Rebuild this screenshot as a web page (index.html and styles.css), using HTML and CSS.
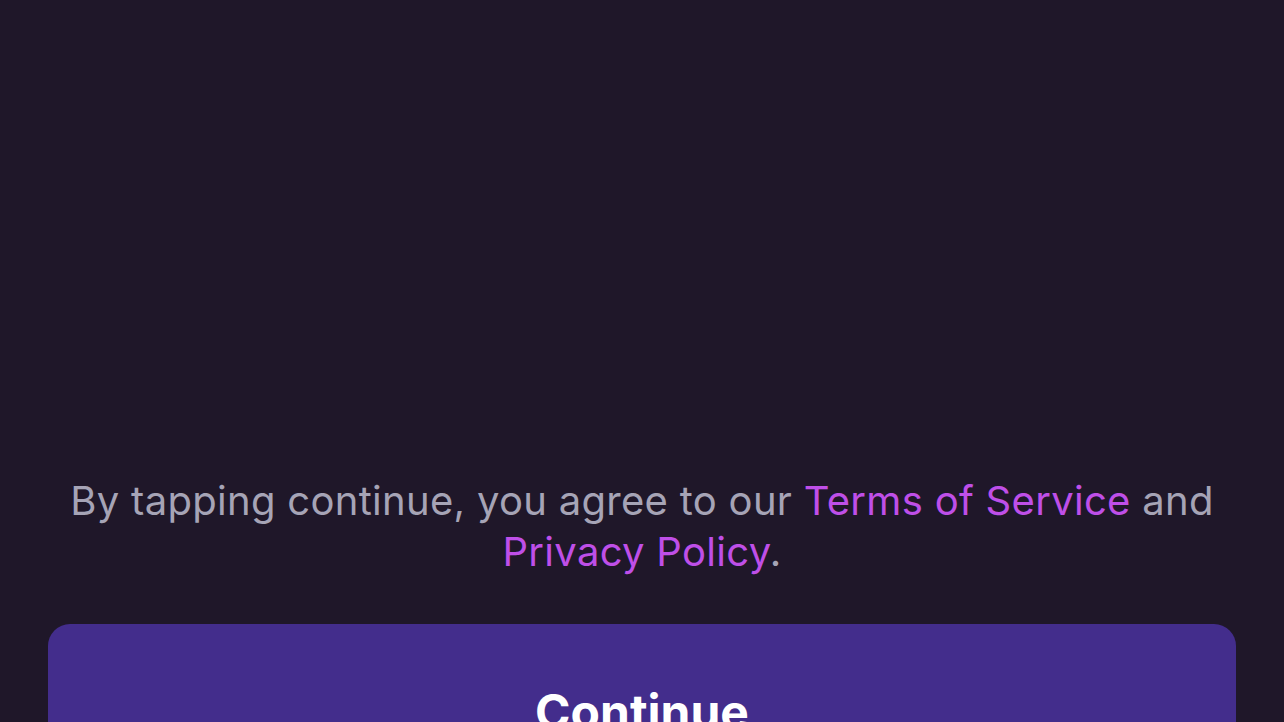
FILE: index.html
```html
<!DOCTYPE html>
<html lang="en">
<head>
<meta charset="utf-8">
<title>Continue</title>
<link rel="stylesheet" href="styles.css">
</head>
<body>
<main class="screen">
  <p class="legal">By tapping continue, you agree to our <a class="link" href="#">Terms of Service</a> and <a class="link" href="#">Privacy Policy</a>.</p>
  <button class="continue" type="button">Continue</button>
</main>
</body>
</html>
```
FILE: styles.css
```css
html, body {
  margin: 0;
  padding: 0;
  background: #1f1729;
}
.screen {
  box-sizing: border-box;
  height: 722px;
  overflow: hidden;
  padding: 475px 48px 0;
  display: flex;
  flex-direction: column;
  font-family: Inter, "Noto Sans", sans-serif;
}
.legal {
  margin: 0;
  text-align: center;
  color: #a6a4b6;
  font-size: 40px;
  line-height: 51px;
  letter-spacing: 0.3px;
}
.link {
  color: #bf4fe8;
  text-decoration: none;
}
.continue {
  margin-top: 47px;
  flex: none;
  height: 174px;
  border: 0;
  border-radius: 22px;
  background: #432d8c;
  color: #ffffff;
  font-family: Inter, "Noto Sans", sans-serif;
  font-weight: 700;
  font-size: 48px;
  padding: 0;
}
```
